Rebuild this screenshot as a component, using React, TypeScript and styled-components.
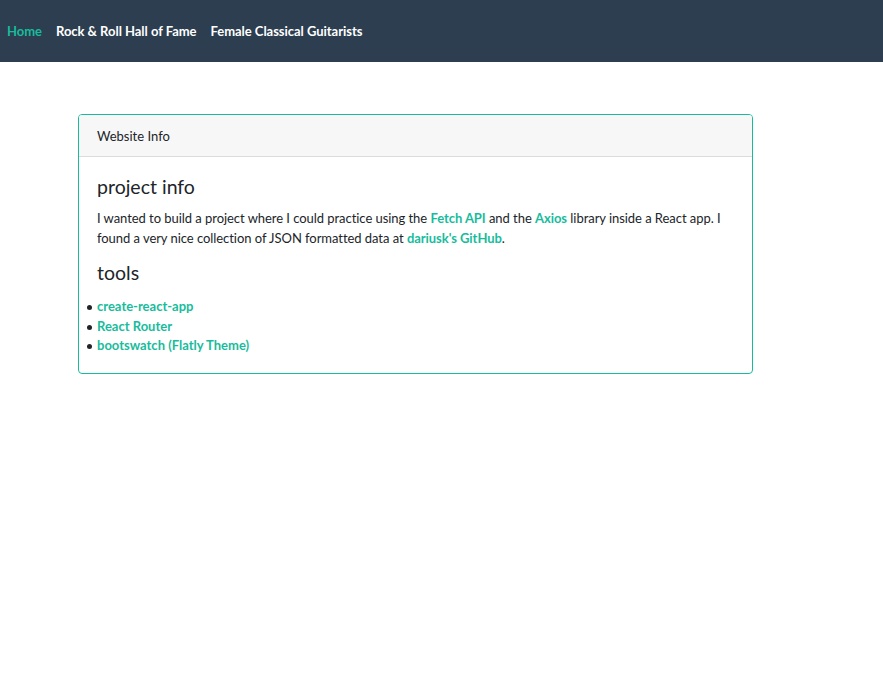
import React from "react";
import styled, { createGlobalStyle } from "styled-components";

const Global = createGlobalStyle`
  html, body { margin: 0; padding: 0; background: #fff; }
  body { font-family: Lato, "Open Sans", "Liberation Sans", sans-serif; color: #212529; font-size: 13px; }
  * { box-sizing: border-box; }
`;

const Nav = styled.nav`
  height: 62px;
  background: #2c3e50;
  display: flex;
  align-items: center;
  padding: 0 7px;
  gap: 14px;
`;

const NavLink = styled.a<{ $active?: boolean }>`
  font-size: 13px;
  font-weight: 700;
  color: ${(p) => (p.$active ? "#18bc9c" : "#ffffff")};
  text-decoration: none;
  line-height: 20px;
  letter-spacing: -0.03px;
`;

const Main = styled.main`
  padding: 52px 0 0 78px;
`;

const Card = styled.section`
  width: 675px;
  border: 1px solid #18bc9c;
  border-radius: 4px;
  overflow: hidden;
`;

const CardHeader = styled.div`
  height: 42px;
  display: flex;
  align-items: center;
  padding: 0 18px;
  background: #f7f7f7;
  border-bottom: 1px solid #dcdcdc;
  font-size: 13px;
`;

const CardBody = styled.div`
  padding: 18px 18px 17px;
`;

const Heading = styled.h4`
  margin: 0 0 9px;
  font-size: 19.5px;
  font-weight: 400;
  line-height: 24px;
`;

const Para = styled.p`
  margin: 0 0 13px;
  line-height: 20px;
  letter-spacing: -0.05px;
`;

const Link = styled.a`
  color: #18bc9c;
  font-weight: 700;
  text-decoration: none;
`;

const List = styled.ul`
  margin: 12px 0 0;
  padding: 0;
  list-style: none;
`;

const Item = styled.li`
  line-height: 19.5px;
  &::before {
    content: "";
    display: inline-block;
    width: 5px;
    height: 5px;
    border-radius: 50%;
    background: #212529;
    margin-left: -10px;
    margin-right: 5px;
    vertical-align: middle;
  }
`;

export default function App() {
  return (
    <>
      <Global />
      <Nav>
        <NavLink $active href="#">Home</NavLink>
        <NavLink href="#">Rock &amp; Roll Hall of Fame</NavLink>
        <NavLink href="#">Female Classical Guitarists</NavLink>
      </Nav>
      <Main>
        <Card>
          <CardHeader>Website Info</CardHeader>
          <CardBody>
            <Heading>project info</Heading>
            <Para>
              I wanted to build a project where I could practice using the <Link href="#">Fetch API</Link> and the{" "}
              <Link href="#">Axios</Link> library inside a React app. I found a very nice collection of JSON formatted data at{" "}
              <Link href="#">dariusk's GitHub</Link>.
            </Para>
            <Heading>tools</Heading>
            <List>
              <Item><Link href="#">create-react-app</Link></Item>
              <Item><Link href="#">React Router</Link></Item>
              <Item><Link href="#">bootswatch (Flatly Theme)</Link></Item>
            </List>
          </CardBody>
        </Card>
      </Main>
    </>
  );
}
